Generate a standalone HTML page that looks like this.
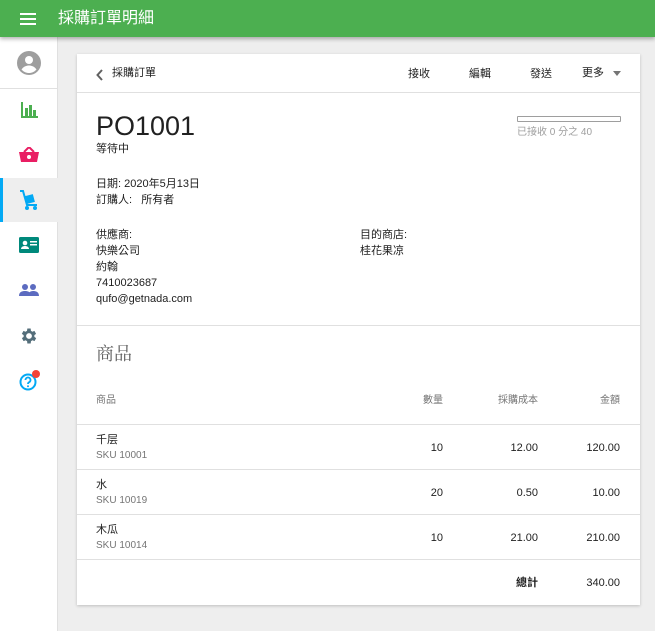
<!DOCTYPE html>
<html><head><meta charset="utf-8"><style>
*{margin:0;padding:0;box-sizing:border-box}
body{width:655px;height:631px;overflow:hidden;background:#eeeeee;font-family:"Liberation Sans","Noto Sans CJK TC",sans-serif;color:#212121;font-size:11px;position:relative}
.a{position:absolute;white-space:nowrap;line-height:1}
#bar{position:absolute;left:0;top:0;width:655px;height:37px;background:#4caf50;box-shadow:0 2px 4px rgba(0,0,0,.3);z-index:2}
#side{position:absolute;left:0;top:37px;width:58px;height:594px;background:#fff;border-right:1px solid #e0e0e0}
#card{position:absolute;left:77px;top:54px;width:563px;height:551px;background:#fff;box-shadow:0 1px 3px rgba(0,0,0,.2)}
.hl{position:absolute;left:0;width:563px;height:1px;background:#e0e0e0}
.r{text-align:right}
.g{color:#757575}
#card .a{margin-top:1px}
</style></head><body>
<div id="bar">
<div class="a" style="left:20px;top:13px;width:16px;height:2px;background:#fff;box-shadow:0 5px 0 #fff,0 10px 0 #fff"></div>
<div class="a" style="left:58px;top:11px;font-size:16px;color:#fff">採購訂單明細</div>
</div>
<div id="side">
<svg class="a" style="left:17px;top:14px" width="24" height="24" viewBox="0 0 24 24"><circle cx="12" cy="12" r="12" fill="#9e9e9e"/><circle cx="12" cy="9" r="4" fill="#fff"/><path d="M4.5 18.5c2-3 5-4 7.5-4s5.5 1 7.5 4c-2 2.3-4.6 3.5-7.5 3.5s-5.5-1.2-7.5-3.5z" fill="#fff"/></svg>
<div class="a" style="left:0;top:51px;width:58px;height:1px;background:#e0e0e0"></div>
<svg class="a" style="left:20px;top:65px" width="18" height="16" viewBox="0 0 18 16"><path d="M1 0v16h17v-2H3V0z M5 6h3v8H5z M9 3h3v11H9z M13 8h3v6h-3z" fill="#4caf50"/></svg>
<svg class="a" style="left:19px;top:110px" width="20" height="16" viewBox="0 0 20 16"><path d="M0 5h20l-2 10H2z" fill="#e91e63"/><path d="M5 5l5-5 5 5" stroke="#e91e63" stroke-width="2" fill="none"/><circle cx="10" cy="10" r="2" fill="#fff"/></svg>
<div class="a" style="left:0;top:141px;width:58px;height:44px;background:#eeeeee"></div>
<div class="a" style="left:0;top:141px;width:3px;height:44px;background:#03a9f4"></div>
<svg class="a" style="left:19px;top:152px" width="20" height="22" viewBox="0 0 20 22"><path d="M1 2h3l4 14h10" stroke="#03a9f4" stroke-width="2" fill="none"/><rect x="7" y="6" width="8" height="8" fill="#03a9f4" transform="rotate(-15 11 10)"/><circle cx="8" cy="19" r="2" fill="#03a9f4"/><circle cx="16" cy="19" r="2" fill="#03a9f4"/></svg>
<svg class="a" style="left:19px;top:200px" width="20" height="16" viewBox="0 0 20 16"><rect width="20" height="16" rx="1.5" fill="#00897b"/><circle cx="6" cy="6" r="2.3" fill="#fff"/><path d="M2 12c0-2 2-3 4-3s4 1 4 3z" fill="#fff"/><rect x="11" y="4" width="7" height="1.5" fill="#fff"/><rect x="11" y="7" width="7" height="1.5" fill="#fff"/></svg>
<svg class="a" style="left:19px;top:247px" width="20" height="12" viewBox="0 0 20 12"><circle cx="6" cy="3" r="3" fill="#5c6bc0"/><circle cx="14" cy="3" r="3" fill="#5c6bc0"/><path d="M0 12c0-4 3-5 6-5s6 1 6 5zM9 12c0-3 2-5 5-5s6 1 6 5z" fill="#5c6bc0"/></svg>
<svg class="a" style="left:19px;top:289px" width="20" height="20" viewBox="0 0 24 24"><path fill="#546e7a" d="M19.4 13a7.5 7.5 0 0 0 0-2l2.1-1.6-2-3.5-2.5 1a7 7 0 0 0-1.7-1L15 3h-4l-.4 2.9a7 7 0 0 0-1.7 1l-2.5-1-2 3.5L6.6 11a7.5 7.5 0 0 0 0 2l-2.1 1.6 2 3.5 2.5-1a7 7 0 0 0 1.7 1L11 21h4l.4-2.9a7 7 0 0 0 1.7-1l2.5 1 2-3.5zM13 15.5a3.5 3.5 0 1 1 0-7 3.5 3.5 0 0 1 0 7z" transform="translate(-1 0)"/></svg>
<svg class="a" style="left:19px;top:333px" width="22" height="22" viewBox="0 0 22 22"><circle cx="9" cy="12" r="7.5" stroke="#03a9f4" stroke-width="2" fill="none"/><path d="M6.5 10a2.5 2.5 0 1 1 3.5 2.3c-.8.4-1 .9-1 1.7" stroke="#03a9f4" stroke-width="1.8" fill="none"/><circle cx="9" cy="16.3" r="1" fill="#03a9f4"/><circle cx="17" cy="4" r="4" fill="#f44336"/></svg>
</div>
<div id="card">
<svg class="a" style="left:19px;top:14px" width="8" height="12" viewBox="0 0 8 12"><path d="M6 1L1.5 6 6 11" stroke="#616161" stroke-width="2" fill="none"/></svg>
<div class="a" style="left:35px;top:13px">採購訂單</div>
<div class="a" style="left:331px;top:14px">接收</div>
<div class="a" style="left:392px;top:14px">編輯</div>
<div class="a" style="left:453px;top:14px">發送</div>
<div class="a" style="left:505px;top:13px">更多</div>
<div class="a" style="left:536px;top:16px;width:0;height:0;border-left:4px solid transparent;border-right:4px solid transparent;border-top:5px solid #757575"></div>
<div class="hl" style="top:38px"></div>
<div class="a" style="left:19px;top:58px;font-size:27px">PO1001</div>
<div class="a" style="left:19px;top:89px">等待中</div>
<div class="a" style="left:440px;top:61px;width:104px;height:6px;border:1px solid #9e9e9e;border-radius:1px"></div>
<div class="a g" style="left:440px;top:73px;font-size:10px;color:#9e9e9e">已接收 0 分之 40</div>
<div class="a" style="left:19px;top:124px">日期: 2020年5月13日</div>
<div class="a" style="left:19px;top:140px">訂購人:&nbsp;&nbsp; 所有者</div>
<div class="a" style="left:19px;top:175px">供應商:</div>
<div class="a" style="left:19px;top:191px">快樂公司</div>
<div class="a" style="left:19px;top:207px">約翰</div>
<div class="a" style="left:19px;top:223px">7410023687</div>
<div class="a" style="left:19px;top:239px">qufo@getnada.com</div>
<div class="a" style="left:283px;top:175px">目的商店:</div>
<div class="a" style="left:283px;top:191px">桂花果凉</div>
<div class="hl" style="top:271px"></div>
<div class="a" style="left:19px;top:290px;font-size:18px;color:#616161;font-family:'Liberation Serif','Noto Serif CJK SC',serif">商品</div>
<div class="a g" style="left:19px;top:341px;font-size:10px">商品</div>
<div class="a g r" style="left:300px;top:341px;width:66px;font-size:10px">數量</div>
<div class="a g r" style="left:400px;top:341px;width:61px;font-size:10px">採購成本</div>
<div class="a g r" style="left:480px;top:341px;width:63px;font-size:10px">金額</div>
<div class="hl" style="top:370px"></div>
<div class="a" style="left:19px;top:380px">千层</div><div class="a g" style="left:19px;top:396px;font-size:10px">SKU 10001</div>
<div class="a r" style="left:300px;top:388px;width:66px">10</div><div class="a r" style="left:400px;top:388px;width:61px">12.00</div><div class="a r" style="left:480px;top:388px;width:63px">120.00</div>
<div class="hl" style="top:415px"></div>
<div class="a" style="left:19px;top:425px">水</div><div class="a g" style="left:19px;top:441px;font-size:10px">SKU 10019</div>
<div class="a r" style="left:300px;top:433px;width:66px">20</div><div class="a r" style="left:400px;top:433px;width:61px">0.50</div><div class="a r" style="left:480px;top:433px;width:63px">10.00</div>
<div class="hl" style="top:460px"></div>
<div class="a" style="left:19px;top:470px">木瓜</div><div class="a g" style="left:19px;top:486px;font-size:10px">SKU 10014</div>
<div class="a r" style="left:300px;top:478px;width:66px">10</div><div class="a r" style="left:400px;top:478px;width:61px">21.00</div><div class="a r" style="left:480px;top:478px;width:63px">210.00</div>
<div class="hl" style="top:505px"></div>
<div class="a r" style="left:400px;top:523px;width:61px;font-weight:bold">總計</div>
<div class="a r" style="left:480px;top:523px;width:63px">340.00</div>
</div>
</body></html>
